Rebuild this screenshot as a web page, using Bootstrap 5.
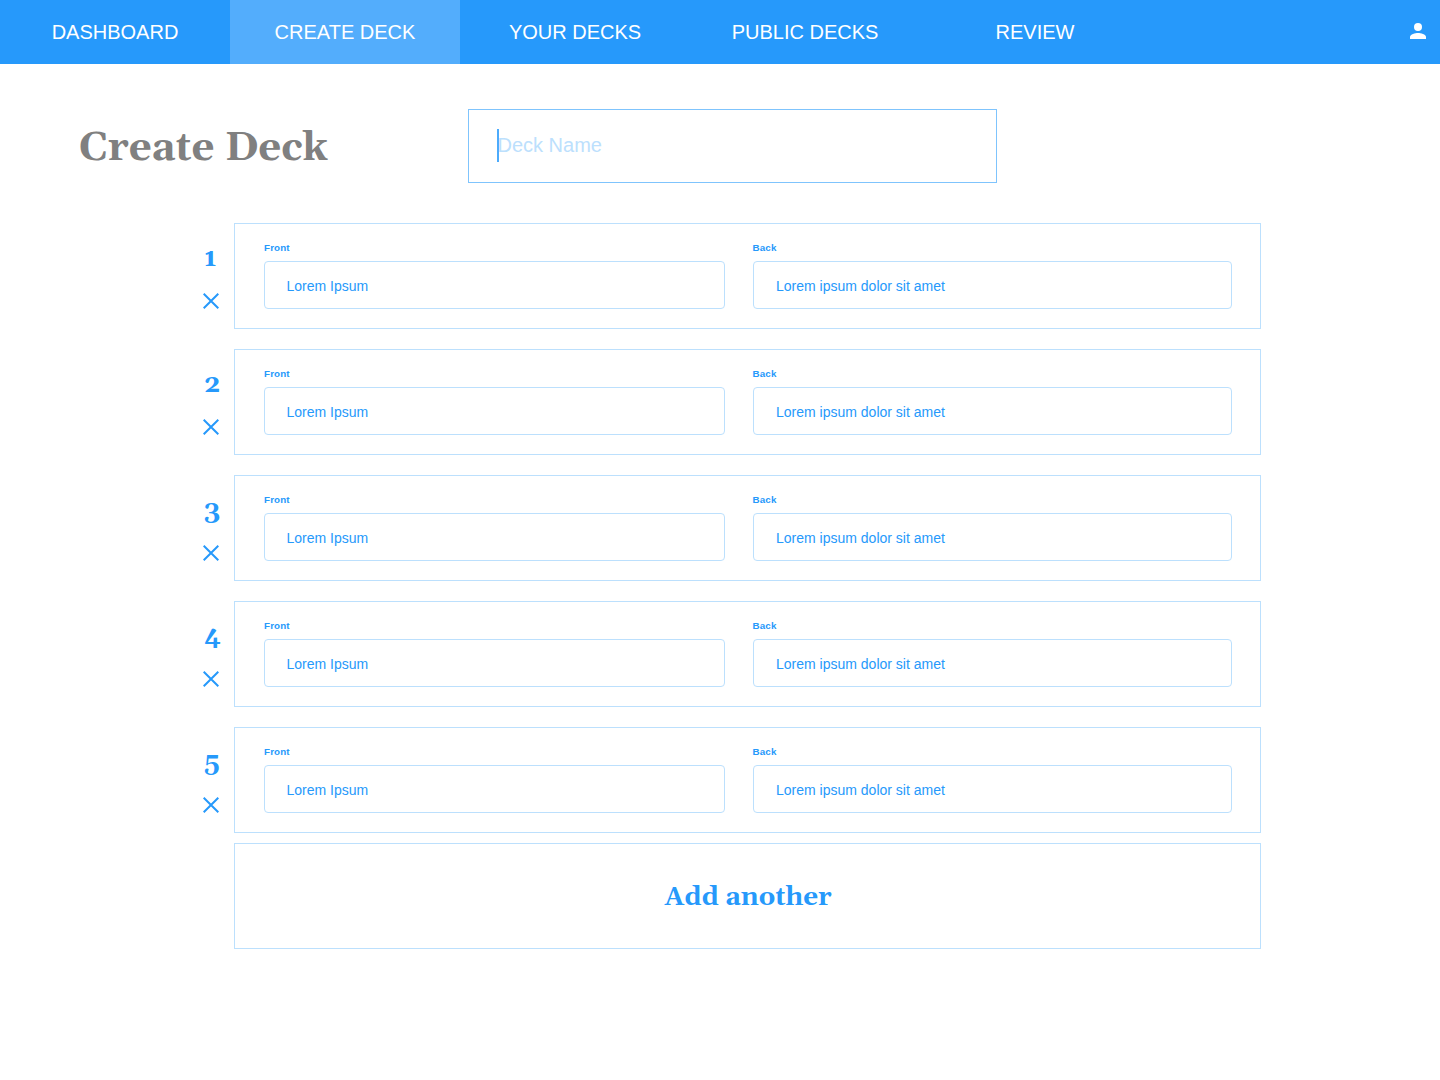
<!DOCTYPE html>
<html lang="en">
<head>
<meta charset="utf-8">
<meta name="viewport" content="width=device-width, initial-scale=1">
<title>Create Deck</title>
<link href="https://cdn.jsdelivr.net/npm/bootstrap@5.3.0/dist/css/bootstrap.min.css" rel="stylesheet">
<style>
  :root { --brand: #2699fb; --brand-light: #bce0fd; --brand-mid: #7fc4fd; }
  body { font-family: "Liberation Sans", Arial, sans-serif; color: var(--brand); min-height: 1080px; }
  .serif { font-family: Georgia, Gelasio, "Liberation Serif", serif; font-weight: 700; }
  .topbar { height: 64px; background: var(--brand); }
  .topbar .nav-link { width: 230px; color: #fff; font-size: 20px; line-height: 24px; padding: 0; }
  .topbar .nav-link.active { background: #53adfc; }
  .user-link { margin-right: 14px; padding-bottom: 2px; }
  .heading-row { padding: 45px 0 0 79px; }
  .page-title { width: 389px; height: 74px; padding-top: 3px; font-size: 40.2px; line-height: 74px; color: gray; }
  .deck-name { width: 529px; height: 74px; border: 1px solid var(--brand-mid); padding: 0 0 2px 28.5px; font-size: 20px; color: var(--brand-light); }
  .caret { left: 28px; top: 19px; width: 2px; height: 33px; background: #4cabfc; }
  .deck-list { width: 1064px; margin: 40px 0 0 197px; gap: 20px; }
  .side { width: 37px; padding-top: 20px; }
  .number { height: 32px; padding-left: 7px; font-size: 26px; line-height: 32px; }
  .remove { margin: 18px 0 0 6px; }
  .flash { height: 106px; border: 1px solid var(--brand-light); padding: 17px 28px 0 29px; }
  .front-col { width: 461px; margin-right: 27.5px; }
  .field-label { font-size: 9.8px; line-height: 13px; height: 20px; font-weight: 700; letter-spacing: .15px; }
  .field-box { height: 48px; border: 1px solid var(--brand-light); border-radius: 4px; padding: 2px 0 0 21.5px; font-size: 14px; line-height: 20px; }
  .back-box { padding-left: 22.5px; }
  .add-box { height: 106px; margin: -10px 0 0 37px; padding: 3px 0 0 1px; border: 1px solid var(--brand-light); font-size: 26px; }
</style>
</head>
<body>
<nav class="topbar d-flex align-items-stretch">
  <a class="nav-link d-flex align-items-center justify-content-center">DASHBOARD</a>
  <a class="nav-link active d-flex align-items-center justify-content-center">CREATE DECK</a>
  <a class="nav-link d-flex align-items-center justify-content-center">YOUR DECKS</a>
  <a class="nav-link d-flex align-items-center justify-content-center">PUBLIC DECKS</a>
  <a class="nav-link d-flex align-items-center justify-content-center">REVIEW</a>
  <a class="user-link d-flex align-items-center ms-auto" aria-label="Account">
    <svg class="d-block" width="16" height="16" viewBox="0 0 16 16" fill="#fff"><circle cx="8" cy="4" r="4"/><path d="M0 16v-2c0-2.700 5.300-4 8-4s8 1.300 8 4v2z"/></svg>
  </a>
</nav>
<main>
  <div class="heading-row d-flex">
    <h1 class="page-title serif mb-0">Create Deck</h1>
    <div class="deck-name position-relative d-flex align-items-center">Deck Name<span class="caret position-absolute"></span></div>
  </div>
  <div class="deck-list d-flex flex-column">
    <div class="d-flex">
      <div class="side"><div class="number serif">1</div><svg class="remove d-block" width="16" height="16" viewBox="0 0 16 16" fill="none" stroke="#2699fb" stroke-width="2"><path d="M.7.7l14.600 14.600M15.300.7L.7 15.300"/></svg></div>
      <div class="flash d-flex flex-grow-1">
        <div class="front-col"><div class="field-label">Front</div><div class="field-box d-flex align-items-center">Lorem Ipsum</div></div>
        <div class="flex-grow-1"><div class="field-label">Back</div><div class="field-box back-box d-flex align-items-center">Lorem ipsum dolor sit amet</div></div>
      </div>
    </div>
    <div class="d-flex">
      <div class="side"><div class="number serif">2</div><svg class="remove d-block" width="16" height="16" viewBox="0 0 16 16" fill="none" stroke="#2699fb" stroke-width="2"><path d="M.7.7l14.600 14.600M15.300.7L.7 15.300"/></svg></div>
      <div class="flash d-flex flex-grow-1">
        <div class="front-col"><div class="field-label">Front</div><div class="field-box d-flex align-items-center">Lorem Ipsum</div></div>
        <div class="flex-grow-1"><div class="field-label">Back</div><div class="field-box back-box d-flex align-items-center">Lorem ipsum dolor sit amet</div></div>
      </div>
    </div>
    <div class="d-flex">
      <div class="side"><div class="number serif">3</div><svg class="remove d-block" width="16" height="16" viewBox="0 0 16 16" fill="none" stroke="#2699fb" stroke-width="2"><path d="M.7.7l14.600 14.600M15.300.7L.7 15.300"/></svg></div>
      <div class="flash d-flex flex-grow-1">
        <div class="front-col"><div class="field-label">Front</div><div class="field-box d-flex align-items-center">Lorem Ipsum</div></div>
        <div class="flex-grow-1"><div class="field-label">Back</div><div class="field-box back-box d-flex align-items-center">Lorem ipsum dolor sit amet</div></div>
      </div>
    </div>
    <div class="d-flex">
      <div class="side"><div class="number serif">4</div><svg class="remove d-block" width="16" height="16" viewBox="0 0 16 16" fill="none" stroke="#2699fb" stroke-width="2"><path d="M.7.7l14.600 14.600M15.300.7L.7 15.300"/></svg></div>
      <div class="flash d-flex flex-grow-1">
        <div class="front-col"><div class="field-label">Front</div><div class="field-box d-flex align-items-center">Lorem Ipsum</div></div>
        <div class="flex-grow-1"><div class="field-label">Back</div><div class="field-box back-box d-flex align-items-center">Lorem ipsum dolor sit amet</div></div>
      </div>
    </div>
    <div class="d-flex">
      <div class="side"><div class="number serif">5</div><svg class="remove d-block" width="16" height="16" viewBox="0 0 16 16" fill="none" stroke="#2699fb" stroke-width="2"><path d="M.7.7l14.600 14.600M15.300.7L.7 15.300"/></svg></div>
      <div class="flash d-flex flex-grow-1">
        <div class="front-col"><div class="field-label">Front</div><div class="field-box d-flex align-items-center">Lorem Ipsum</div></div>
        <div class="flex-grow-1"><div class="field-label">Back</div><div class="field-box back-box d-flex align-items-center">Lorem ipsum dolor sit amet</div></div>
      </div>
    </div>
    <div class="add-box serif d-flex align-items-center justify-content-center">Add another</div>
  </div>
</main>
<script src="https://cdn.jsdelivr.net/npm/bootstrap@5.3.0/dist/js/bootstrap.bundle.min.js"></script>
</body>
</html>
